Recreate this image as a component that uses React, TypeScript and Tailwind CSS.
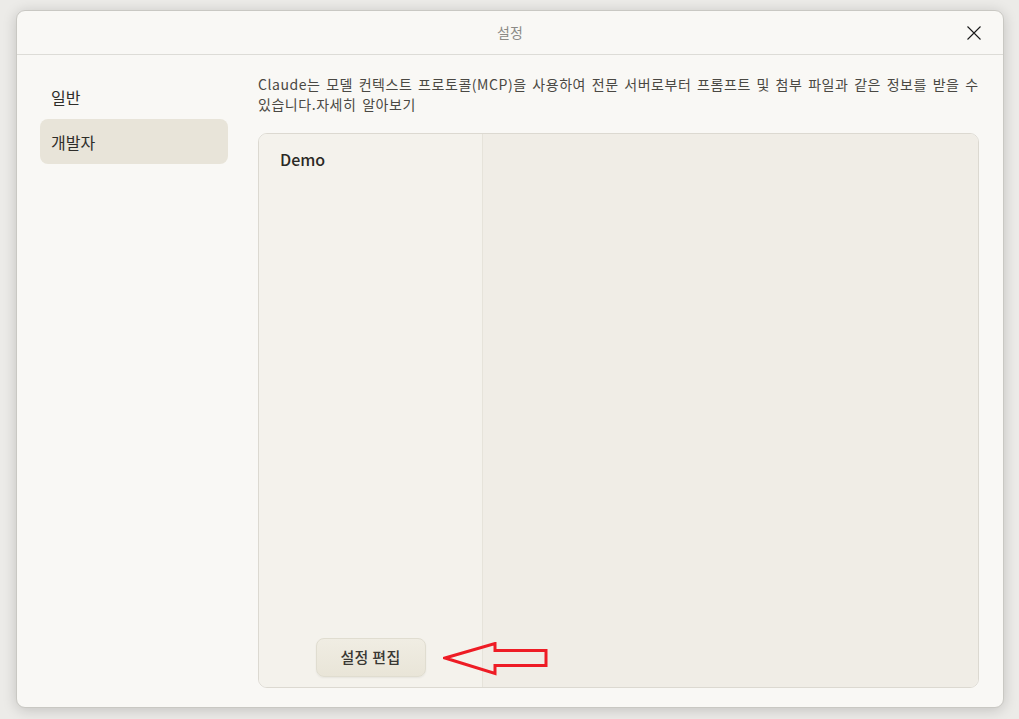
import React from "react";

export default function App() {
  const font = { fontFamily: '"Noto Sans CJK KR", "Noto Sans", sans-serif' };
  return (
    <div
      className="w-[1019px] h-[719px] bg-[#ecebe8] pt-[10px] pl-[16px] pr-[15px] pb-[11px] overflow-hidden"
      style={font}
    >
      <div className="w-full h-full bg-[#f9f8f5] rounded-[9px] border border-[#c9c8c3] shadow-[0_2px_14px_rgba(0,0,0,0.18)] flex flex-col overflow-hidden">
        {/* Title bar */}
        <div className="h-[44px] shrink-0 border-b border-[#dddcd7] flex items-center justify-center relative">
          <span className="text-[14px] text-[#8b8a86]">설정</span>
          <button className="absolute right-[20px] top-[13px] w-[18px] h-[18px] flex items-center justify-center">
            <svg width="16" height="16" viewBox="0 0 16 16">
              <path d="M1.5 1.5 L14.5 14.5 M14.5 1.5 L1.5 14.5" stroke="#1a1a1a" strokeWidth="1.1" fill="none" />
            </svg>
          </button>
        </div>
        {/* Body */}
        <div className="flex-1 flex pt-[19px] pb-[19px] pr-[24px] min-h-0">
          {/* Sidebar */}
          <div className="w-[188px] ml-[23px] shrink-0 flex flex-col">
            <div className="h-[45px] flex items-center px-[11px] text-[16px] text-[#2e2d2a] rounded-[8px]">일반</div>
            <div className="h-[45px] flex items-center px-[11px] text-[16px] text-[#2e2d2a] rounded-[8px] bg-[#e8e4d9]">개발자</div>
          </div>
          {/* Content */}
          <div className="flex-1 ml-[30px] flex flex-col min-w-0">
            <p className="text-[14px] leading-[20px] text-[#4a4843] tracking-[0.55px] [word-spacing:2px] whitespace-nowrap">
              Claude는 모델 컨텍스트 프로토콜(MCP)을 사용하여 전문 서버로부터 프롬프트 및 첨부 파일과 같은 정보를 받을 수
              <br />
              있습니다.자세히 알아보기
            </p>
            <div className="mt-[19px] flex-1 flex border border-[#dcd9d1] rounded-[9px] overflow-hidden">
              <div className="w-[224px] shrink-0 bg-[#f4f2ec] border-r border-[#e6e3da] flex flex-col">
                <div className="pl-[21px] pt-[13px] text-[16px] font-medium text-[#2a2925]">Demo</div>
                <div className="flex-1" />
                <div className="flex justify-center pb-[10px] relative">
                  <button className="w-[110px] h-[39px] rounded-[8px] border border-[#e0ddd0] bg-gradient-to-b from-[#f0ede3] to-[#e9e5d8] text-[15px] font-medium text-[#3a3834] tracking-[0.3px] shadow-[0_1px_2px_rgba(0,0,0,0.06)]">
                    설정 편집
                  </button>
                </div>
              </div>
              <div className="flex-1 bg-[#f0ede6] relative">
                <svg className="absolute left-[-40px] top-[508px]" width="106" height="36" viewBox="0 0 106 36">
                  <path
                    d="M2 16 L52 1.5 L52 8.5 L103 8.5 L103 23.5 L52 23.5 L52 31.5 Z"
                    fill="none"
                    stroke="#ee1c25"
                    strokeWidth="3"
                    strokeLinejoin="miter"
                  />
                </svg>
              </div>
            </div>
          </div>
        </div>
      </div>
    </div>
  );
}
